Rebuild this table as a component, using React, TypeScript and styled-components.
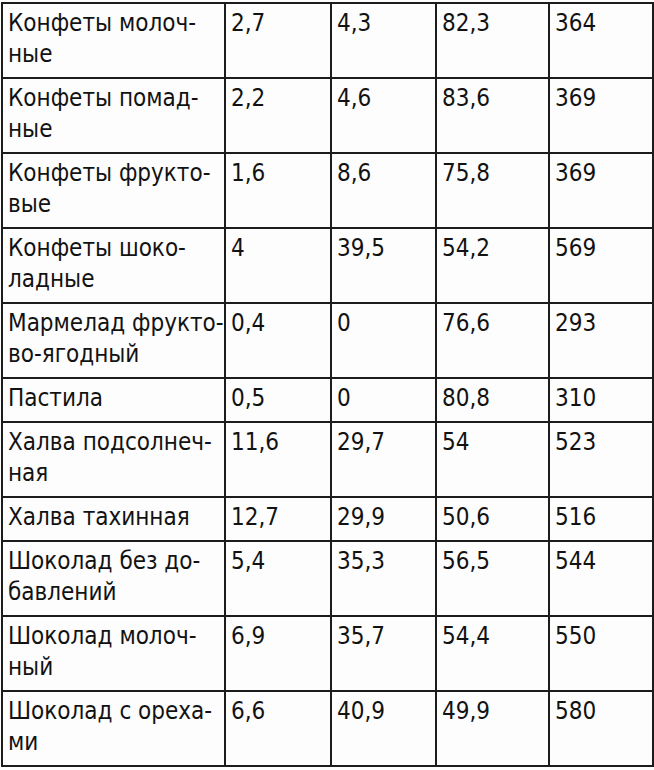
import React from "react";
import styled, { createGlobalStyle } from "styled-components";

type Row = {
  name: string[];
  protein: string;
  fat: string;
  carbs: string;
  kcal: string;
};

const rows: Row[] = [
  { name: ["Конфеты молоч-", "ные"], protein: "2,7", fat: "4,3", carbs: "82,3", kcal: "364" },
  { name: ["Конфеты помад-", "ные"], protein: "2,2", fat: "4,6", carbs: "83,6", kcal: "369" },
  { name: ["Конфеты фрукто-", "вые"], protein: "1,6", fat: "8,6", carbs: "75,8", kcal: "369" },
  { name: ["Конфеты шоко-", "ладные"], protein: "4", fat: "39,5", carbs: "54,2", kcal: "569" },
  { name: ["Мармелад фрукто-", "во-ягодный"], protein: "0,4", fat: "0", carbs: "76,6", kcal: "293" },
  { name: ["Пастила"], protein: "0,5", fat: "0", carbs: "80,8", kcal: "310" },
  { name: ["Халва подсолнеч-", "ная"], protein: "11,6", fat: "29,7", carbs: "54", kcal: "523" },
  { name: ["Халва тахинная"], protein: "12,7", fat: "29,9", carbs: "50,6", kcal: "516" },
  { name: ["Шоколад без до-", "бавлений"], protein: "5,4", fat: "35,3", carbs: "56,5", kcal: "544" },
  { name: ["Шоколад молоч-", "ный"], protein: "6,9", fat: "35,7", carbs: "54,4", kcal: "550" },
  { name: ["Шоколад с ореха-", "ми"], protein: "6,6", fat: "40,9", carbs: "49,9", kcal: "580" },
];

const GlobalStyle = createGlobalStyle`
  html, body {
    margin: 0;
    padding: 0;
    background: #fdfdfd;
  }
`;

const Page = styled.div`
  padding: 2px 0 0 1px;
`;

const Table = styled.table`
  border-collapse: collapse;
  table-layout: fixed;
  width: 651px;
  font-family: "DejaVu Sans Condensed", "DejaVu Sans", Verdana, sans-serif;
  font-stretch: condensed;
  font-size: 24px;
  line-height: 31px;
  color: #121212;
`;

const Cell = styled.td`
  border: 2px solid #1c1c1c;
  padding: 4px 2px 7px 5px;
  vertical-align: top;
  white-space: nowrap;
  overflow: hidden;
`;

const Line = styled.div`
  display: block;
`;

const widths = [223, 106, 105, 113, 104];

export default function App() {
  return (
    <Page>
      <GlobalStyle />
      <Table>
        <colgroup>
          {widths.map((w, i) => (
            <col key={i} style={{ width: w }} />
          ))}
        </colgroup>
        <tbody>
          {rows.map((r) => (
            <tr key={r.name.join("")}>
              <Cell>
                {r.name.map((n) => (
                  <Line key={n}>{n}</Line>
                ))}
              </Cell>
              <Cell>{r.protein}</Cell>
              <Cell>{r.fat}</Cell>
              <Cell>{r.carbs}</Cell>
              <Cell>{r.kcal}</Cell>
            </tr>
          ))}
        </tbody>
      </Table>
    </Page>
  );
}
